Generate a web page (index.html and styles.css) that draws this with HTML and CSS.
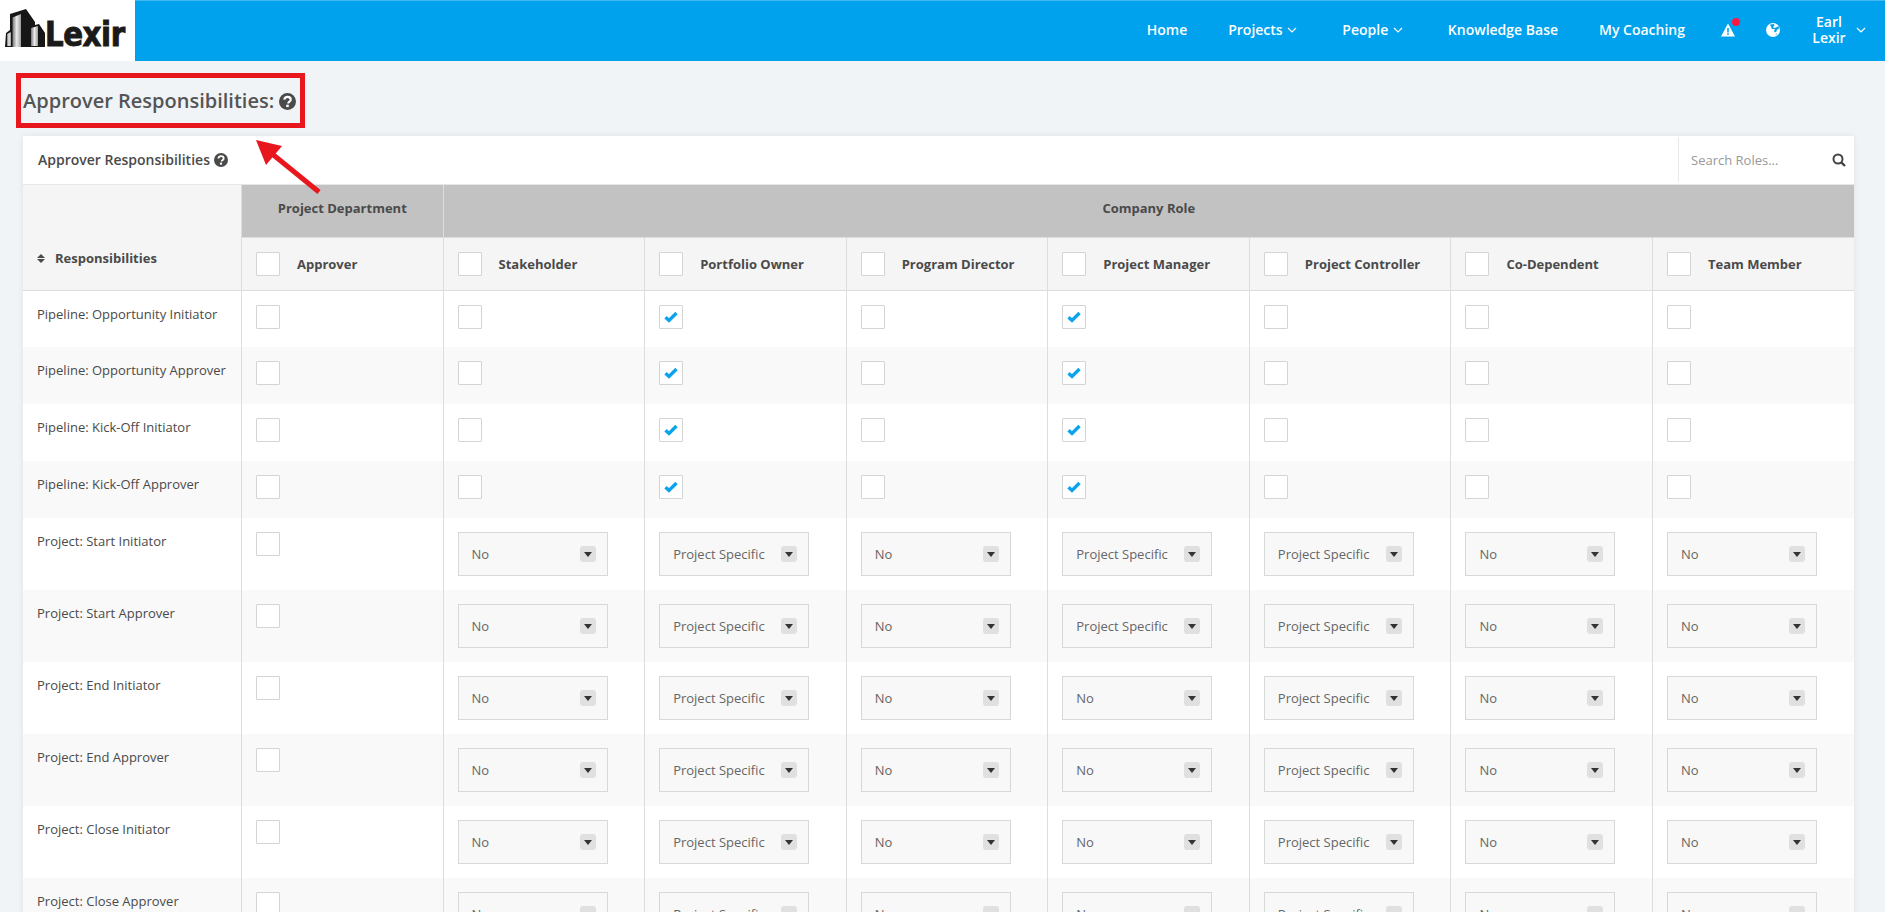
FILE: index.html
```html
<!DOCTYPE html>
<html lang="en">
<head>
    <meta charset="UTF-8">
    <meta name="viewport" content="width=device-width, initial-scale=1.0">
    <title>Approver Responsibilities</title>
    <link rel="stylesheet" href="styles.css">
</head>
<body>
    <svg class="icon-defs" aria-hidden="true">
        <symbol id="i-help" viewBox="0 0 24 24">
            <circle cx="12" cy="12" r="12" fill="currentColor"/>
            <path d="M7.500 9.400c.3-2.500 2.200-3.900 4.600-3.900 2.600 0 4.500 1.600 4.500 3.800 0 1.800-1.100 2.600-2.200 3.300-.9.600-1.300 1-1.300 2.100" fill="none" stroke="#fff" stroke-width="3"/>
            <rect x="10.200" y="16.500" width="3.600" height="3.400" fill="#fff"/>
        </symbol>
        <symbol id="i-check" viewBox="0 0 14 12">
            <path d="M1.500 6.200 5 9.500 12.500 2" fill="none" stroke="#0ba3ee" stroke-width="3.400"/>
        </symbol>
        <symbol id="i-chev" viewBox="0 0 10 6">
            <path d="M1 1l4 4 4-4" fill="none" stroke="currentColor" stroke-width="1.200"/>
        </symbol>
    </svg>

    <header class="topbar">
        <a class="logo" href="#">
            <svg class="logo-mark" viewBox="0 0 46 42" aria-hidden="true">
                <defs>
                    <linearGradient id="face" x1="0" x2="1" y1="0" y2="0">
                        <stop offset="0" stop-color="#777"/>
                        <stop offset="0.5" stop-color="#ececec"/>
                        <stop offset="1" stop-color="#999"/>
                    </linearGradient>
                </defs>
                <path d="M3 41 4 27 8 24V8L24 3 33 16V19L37 18 43 27V41Z" fill="#161616"/>
                <path d="M10.500 11.500 19 8V41H10.500Z" fill="url(#face)"/>
                <path d="M5 28 9 26V40H5Z" fill="url(#face)"/>
                <path d="M29 22 36 20V40H29Z" fill="url(#face)"/>
            </svg>
            <span class="logo-text">Lexir</span>
        </a>
        <nav class="nav">
            <a href="#">Home</a>
            <a class="has-menu" href="#">Projects <svg class="chev"><use href="#i-chev"/></svg></a>
            <a class="has-menu" href="#">People <svg class="chev"><use href="#i-chev"/></svg></a>
            <a href="#">Knowledge Base</a>
            <a class="last-link" href="#">My Coaching</a>
            <span class="nav-icon alert">
                <svg viewBox="0 0 14 13" aria-hidden="true">
                    <path d="M7 0 14 13H0Z" fill="#fff"/>
                    <path d="M6.200 4.500h1.600v4.500H6.200zM6.200 10h1.600v1.500H6.200z" fill="#00a2ee"/>
                </svg>
                <i class="dot"></i>
            </span>
            <span class="nav-icon globe">
                <svg viewBox="0 0 14 14" aria-hidden="true">
                    <circle cx="7" cy="7" r="7" fill="#fff"/>
                    <path d="M4 1.500 8 1 8.500 2.500 7 4 8 5 10 4.500 12.500 3 13 6 11 6.500 10.500 8.500 9 9.500 8 8 9 6 6 6Z" fill="#00a2ee"/>
                    <path d="M9.500 11 11 10.500 10.500 12Z" fill="#00a2ee"/>
                </svg>
            </span>
            <span class="user">Earl<br>Lexir</span>
            <svg class="chev user-chev"><use href="#i-chev"/></svg>
        </nav>
    </header>

    <main class="page">
        <h1 class="page-title">Approver Responsibilities: <svg class="help"><use href="#i-help"/></svg></h1>

        <section class="card">
            <div class="card-head">
                <h2 class="card-title">Approver Responsibilities <svg class="help"><use href="#i-help"/></svg></h2>
                <div class="search">
                    <span class="search-text">Search Roles...</span>
                    <svg class="search-icon" viewBox="0 0 14 14" aria-hidden="true">
                        <circle cx="6" cy="6" r="4.500" fill="none" stroke="currentColor" stroke-width="2"/>
                        <path d="M9.300 9.300 13 13" stroke="currentColor" stroke-width="2.400"/>
                    </svg>
                </div>
            </div>

            <table class="roles">
                <colgroup>
                    <col class="col-first">
                    <col><col><col><col><col><col><col><col>
                </colgroup>
                <thead>
                    <tr class="group-row">
                        <th class="resp-head" rowspan="2">
                            <span class="sort"><i></i><i></i></span>Responsibilities
                        </th>
                        <th>Project Department</th>
                        <th colspan="7">Company Role</th>
                    </tr>
                    <tr class="role-row">
                        <th><div class="role"><span class="box"></span>Approver</div></th>
                        <th><div class="role"><span class="box"></span>Stakeholder</div></th>
                        <th><div class="role"><span class="box"></span>Portfolio Owner</div></th>
                        <th><div class="role"><span class="box"></span>Program Director</div></th>
                        <th><div class="role"><span class="box"></span>Project Manager</div></th>
                        <th><div class="role"><span class="box"></span>Project Controller</div></th>
                        <th><div class="role"><span class="box"></span>Co-Dependent</div></th>
                        <th><div class="role"><span class="box"></span>Team Member</div></th>
                    </tr>
                </thead>
                <tbody>
                    <tr class="check-row">
                        <td>Pipeline: Opportunity Initiator</td>
                        <td><span class="box"></span></td>
                        <td><span class="box"></span></td>
                        <td><span class="box"><svg><use href="#i-check"/></svg></span></td>
                        <td><span class="box"></span></td>
                        <td><span class="box"><svg><use href="#i-check"/></svg></span></td>
                        <td><span class="box"></span></td>
                        <td><span class="box"></span></td>
                        <td><span class="box"></span></td>
                    </tr>
                    <tr class="check-row">
                        <td>Pipeline: Opportunity Approver</td>
                        <td><span class="box"></span></td>
                        <td><span class="box"></span></td>
                        <td><span class="box"><svg><use href="#i-check"/></svg></span></td>
                        <td><span class="box"></span></td>
                        <td><span class="box"><svg><use href="#i-check"/></svg></span></td>
                        <td><span class="box"></span></td>
                        <td><span class="box"></span></td>
                        <td><span class="box"></span></td>
                    </tr>
                    <tr class="check-row">
                        <td>Pipeline: Kick-Off Initiator</td>
                        <td><span class="box"></span></td>
                        <td><span class="box"></span></td>
                        <td><span class="box"><svg><use href="#i-check"/></svg></span></td>
                        <td><span class="box"></span></td>
                        <td><span class="box"><svg><use href="#i-check"/></svg></span></td>
                        <td><span class="box"></span></td>
                        <td><span class="box"></span></td>
                        <td><span class="box"></span></td>
                    </tr>
                    <tr class="check-row">
                        <td>Pipeline: Kick-Off Approver</td>
                        <td><span class="box"></span></td>
                        <td><span class="box"></span></td>
                        <td><span class="box"><svg><use href="#i-check"/></svg></span></td>
                        <td><span class="box"></span></td>
                        <td><span class="box"><svg><use href="#i-check"/></svg></span></td>
                        <td><span class="box"></span></td>
                        <td><span class="box"></span></td>
                        <td><span class="box"></span></td>
                    </tr>
                    <tr>
                        <td>Project: Start Initiator</td>
                        <td><span class="box"></span></td>
                        <td><div class="pick">No<i></i></div></td>
                        <td><div class="pick">Project Specific<i></i></div></td>
                        <td><div class="pick">No<i></i></div></td>
                        <td><div class="pick">Project Specific<i></i></div></td>
                        <td><div class="pick">Project Specific<i></i></div></td>
                        <td><div class="pick">No<i></i></div></td>
                        <td><div class="pick">No<i></i></div></td>
                    </tr>
                    <tr>
                        <td>Project: Start Approver</td>
                        <td><span class="box"></span></td>
                        <td><div class="pick">No<i></i></div></td>
                        <td><div class="pick">Project Specific<i></i></div></td>
                        <td><div class="pick">No<i></i></div></td>
                        <td><div class="pick">Project Specific<i></i></div></td>
                        <td><div class="pick">Project Specific<i></i></div></td>
                        <td><div class="pick">No<i></i></div></td>
                        <td><div class="pick">No<i></i></div></td>
                    </tr>
                    <tr>
                        <td>Project: End Initiator</td>
                        <td><span class="box"></span></td>
                        <td><div class="pick">No<i></i></div></td>
                        <td><div class="pick">Project Specific<i></i></div></td>
                        <td><div class="pick">No<i></i></div></td>
                        <td><div class="pick">No<i></i></div></td>
                        <td><div class="pick">Project Specific<i></i></div></td>
                        <td><div class="pick">No<i></i></div></td>
                        <td><div class="pick">No<i></i></div></td>
                    </tr>
                    <tr>
                        <td>Project: End Approver</td>
                        <td><span class="box"></span></td>
                        <td><div class="pick">No<i></i></div></td>
                        <td><div class="pick">Project Specific<i></i></div></td>
                        <td><div class="pick">No<i></i></div></td>
                        <td><div class="pick">No<i></i></div></td>
                        <td><div class="pick">Project Specific<i></i></div></td>
                        <td><div class="pick">No<i></i></div></td>
                        <td><div class="pick">No<i></i></div></td>
                    </tr>
                    <tr>
                        <td>Project: Close Initiator</td>
                        <td><span class="box"></span></td>
                        <td><div class="pick">No<i></i></div></td>
                        <td><div class="pick">Project Specific<i></i></div></td>
                        <td><div class="pick">No<i></i></div></td>
                        <td><div class="pick">No<i></i></div></td>
                        <td><div class="pick">Project Specific<i></i></div></td>
                        <td><div class="pick">No<i></i></div></td>
                        <td><div class="pick">No<i></i></div></td>
                    </tr>
                    <tr>
                        <td>Project: Close Approver</td>
                        <td><span class="box"></span></td>
                        <td><div class="pick">No<i></i></div></td>
                        <td><div class="pick">Project Specific<i></i></div></td>
                        <td><div class="pick">No<i></i></div></td>
                        <td><div class="pick">No<i></i></div></td>
                        <td><div class="pick">Project Specific<i></i></div></td>
                        <td><div class="pick">No<i></i></div></td>
                        <td><div class="pick">No<i></i></div></td>
                    </tr>
                </tbody>
            </table>
        </section>
    </main>

    <!-- Red markup drawn over the page -->
    <div class="mark-box"></div>
    <svg class="mark-arrow" viewBox="0 0 80 70" aria-hidden="true">
        <path d="M1 1 27 7 11 26Z" fill="#e8171e"/>
        <path d="M16 14 64 53" stroke="#e8171e" stroke-width="5"/>
    </svg>
</body>
</html>
```

FILE: styles.css
```css
:root {
    --azul: #00a2ee;
    --fondo: #f0f4f7;
    --linea: #dddddd;
    --texto: #4a4a4a;
}

html, body {
    height: 100%;
    overflow: hidden;
}

body {
    margin: 0;
    position: relative;
    background: var(--fondo);
    color: var(--texto);
    font-family: 'Open Sans', sans-serif;
    font-size: 13px;
}

a {
    color: inherit;
    text-decoration: none;
}

.icon-defs {
    position: absolute;
    width: 0;
    height: 0;
}

/* Top bar */
.topbar {
    display: flex;
    justify-content: space-between;
    height: 60px;
    background: var(--azul);
    border-top: 1px solid #45b8f0;
}

.logo {
    display: flex;
    align-items: flex-end;
    width: 135px;
    height: 61px;
    margin-top: -1px;
    padding: 0 0 13px 2px;
    box-sizing: border-box;
    background: #fff;
}

.logo-mark {
    width: 46px;
    height: 42px;
    flex: none;
}

.logo-text {
    margin: 0 0 -4px -3px;
    color: #1a1a1a;
    font-family: 'DejaVu Sans', sans-serif;
    font-size: 34px;
    font-weight: 700;
    line-height: 36px;
    letter-spacing: -0.5px;
    -webkit-text-stroke: 1px #1a1a1a;
    transform: scaleX(0.86);
    transform-origin: left center;
}

.nav {
    display: flex;
    align-items: center;
    padding-bottom: 3px;
    box-sizing: border-box;
    color: #fff;
    font-size: 14px;
    font-weight: 600;
}

.nav a {
    margin-right: 41px;
    white-space: nowrap;
}

.nav a.has-menu {
    margin-right: 45px;
}

.nav a.last-link {
    margin-right: 36px;
}

.chev {
    width: 10px;
    height: 6px;
    margin-left: 1px;
    vertical-align: 2px;
}

.nav-icon {
    position: relative;
    display: block;
    width: 14px;
    height: 14px;
    margin-right: 31px;
}

.nav-icon.globe {
    margin-right: 24px;
}

.nav-icon svg {
    display: block;
    width: 14px;
    height: 14px;
}

.dot {
    position: absolute;
    top: -5px;
    right: -5px;
    width: 8px;
    height: 8px;
    background: #ff1744;
    border-radius: 50%;
}

.user {
    width: 50px;
    text-align: center;
    line-height: 16px;
}

.user-chev {
    margin: 0 19px 0 2px;
}

/* Page */
.page {
    padding: 0 31px 0 23px;
}

.page-title {
    margin: 0;
    height: 75px;
    line-height: 79px;
    color: #555;
    font-size: 20px;
    font-weight: 600;
}

.help {
    width: 17px;
    height: 17px;
    vertical-align: -2px;
    color: var(--texto);
}

.card {
    background: #fff;
    box-shadow: 0 0 6px rgba(0, 0, 0, 0.08);
}

.card-head {
    display: flex;
    justify-content: space-between;
    align-items: stretch;
    height: 49px;
    padding-bottom: 2px;
    box-sizing: border-box;
    border-bottom: 1px solid #e6e6e6;
}

.card-title {
    margin: 0;
    padding-left: 15px;
    align-self: center;
    font-size: 14px;
    font-weight: 600;
}

.card-title .help {
    width: 14px;
    height: 14px;
}

.search {
    display: flex;
    justify-content: space-between;
    align-items: center;
    width: 176px;
    margin: 1px 0 0;
    padding: 0 8px 0 12px;
    box-sizing: border-box;
    border-left: 1px solid #e9e9e9;
}

.search-text {
    color: #999;
}

.search-icon {
    width: 14px;
    height: 14px;
    color: #444;
}

/* Table */
.roles {
    width: 100%;
    table-layout: fixed;
    border-collapse: collapse;
}

.col-first {
    width: 218.500px;
}

.roles th,
.roles td {
    box-sizing: border-box;
    border-left: 1px solid var(--linea);
    border-right: 1px solid var(--linea);
    text-align: left;
}

.roles th:first-child,
.roles td:first-child {
    border-left: 0;
}

.roles tr > :last-child {
    border-right: 0;
}

.group-row th {
    height: 52px;
    padding-bottom: 6px;
    background: #c2c2c2;
    border-bottom: 1px solid var(--linea);
    text-align: center;
    font-size: 13px;
    font-weight: 700;
}

.roles th.resp-head {
    padding: 0 14px 23px;
    background: #f5f5f5;
    border-bottom: 1px solid var(--linea);
    text-align: left;
    vertical-align: bottom;
}

.sort {
    display: inline-block;
    width: 18px;
    vertical-align: -1px;
}

.sort i {
    display: block;
    width: 0;
    height: 0;
    margin-bottom: 1px;
    border-left: 4px solid transparent;
    border-right: 4px solid transparent;
    border-bottom: 4.500px solid var(--texto);
}

.sort i + i {
    border-bottom: 0;
    border-top: 4.500px solid var(--texto);
}

.role-row th {
    height: 53px;
    padding: 0 14px;
    background: #f5f5f5;
    border-bottom: 1px solid var(--linea);
    font-size: 13px;
    font-weight: 700;
}

.role {
    display: flex;
    align-items: center;
    gap: 17px;
}

.box {
    display: block;
    flex: none;
    width: 24px;
    height: 24px;
    box-sizing: border-box;
    background: #fff;
    border: 1px solid #d4d4d4;
    border-radius: 1px;
}

.box svg {
    display: block;
    width: 14px;
    height: 12px;
    margin: 5px 0 0 4px;
}

.roles td {
    height: 72px;
    padding: 14px;
    vertical-align: top;
    line-height: 18px;
}

.roles td:first-child {
    padding-left: 14px;
    padding-right: 0;
}

.roles .check-row td {
    height: 57px;
    padding-bottom: 0;
}

.roles tbody tr:nth-child(even) {
    background: #f9f9f9;
}

.pick {
    position: relative;
    width: 150px;
    height: 44px;
    box-sizing: border-box;
    padding-left: 13px;
    background: #f8f8f8;
    border: 1px solid #d8d8d8;
    line-height: 42px;
    color: #666;
}

.pick i {
    position: absolute;
    top: 13px;
    right: 11px;
    width: 16px;
    height: 16px;
    background: #e0e0e0;
    border-radius: 3px;
}

.pick i::after {
    content: "";
    position: absolute;
    top: 6px;
    left: 4px;
    border-left: 4px solid transparent;
    border-right: 4px solid transparent;
    border-top: 5px solid #333;
}

/* Red markup */
.mark-box {
    position: absolute;
    top: 73px;
    left: 16px;
    width: 289px;
    height: 55px;
    box-sizing: border-box;
    border: 5px solid #e8171e;
}

.mark-arrow {
    position: absolute;
    top: 139px;
    left: 255px;
    width: 80px;
    height: 70px;
}
```
